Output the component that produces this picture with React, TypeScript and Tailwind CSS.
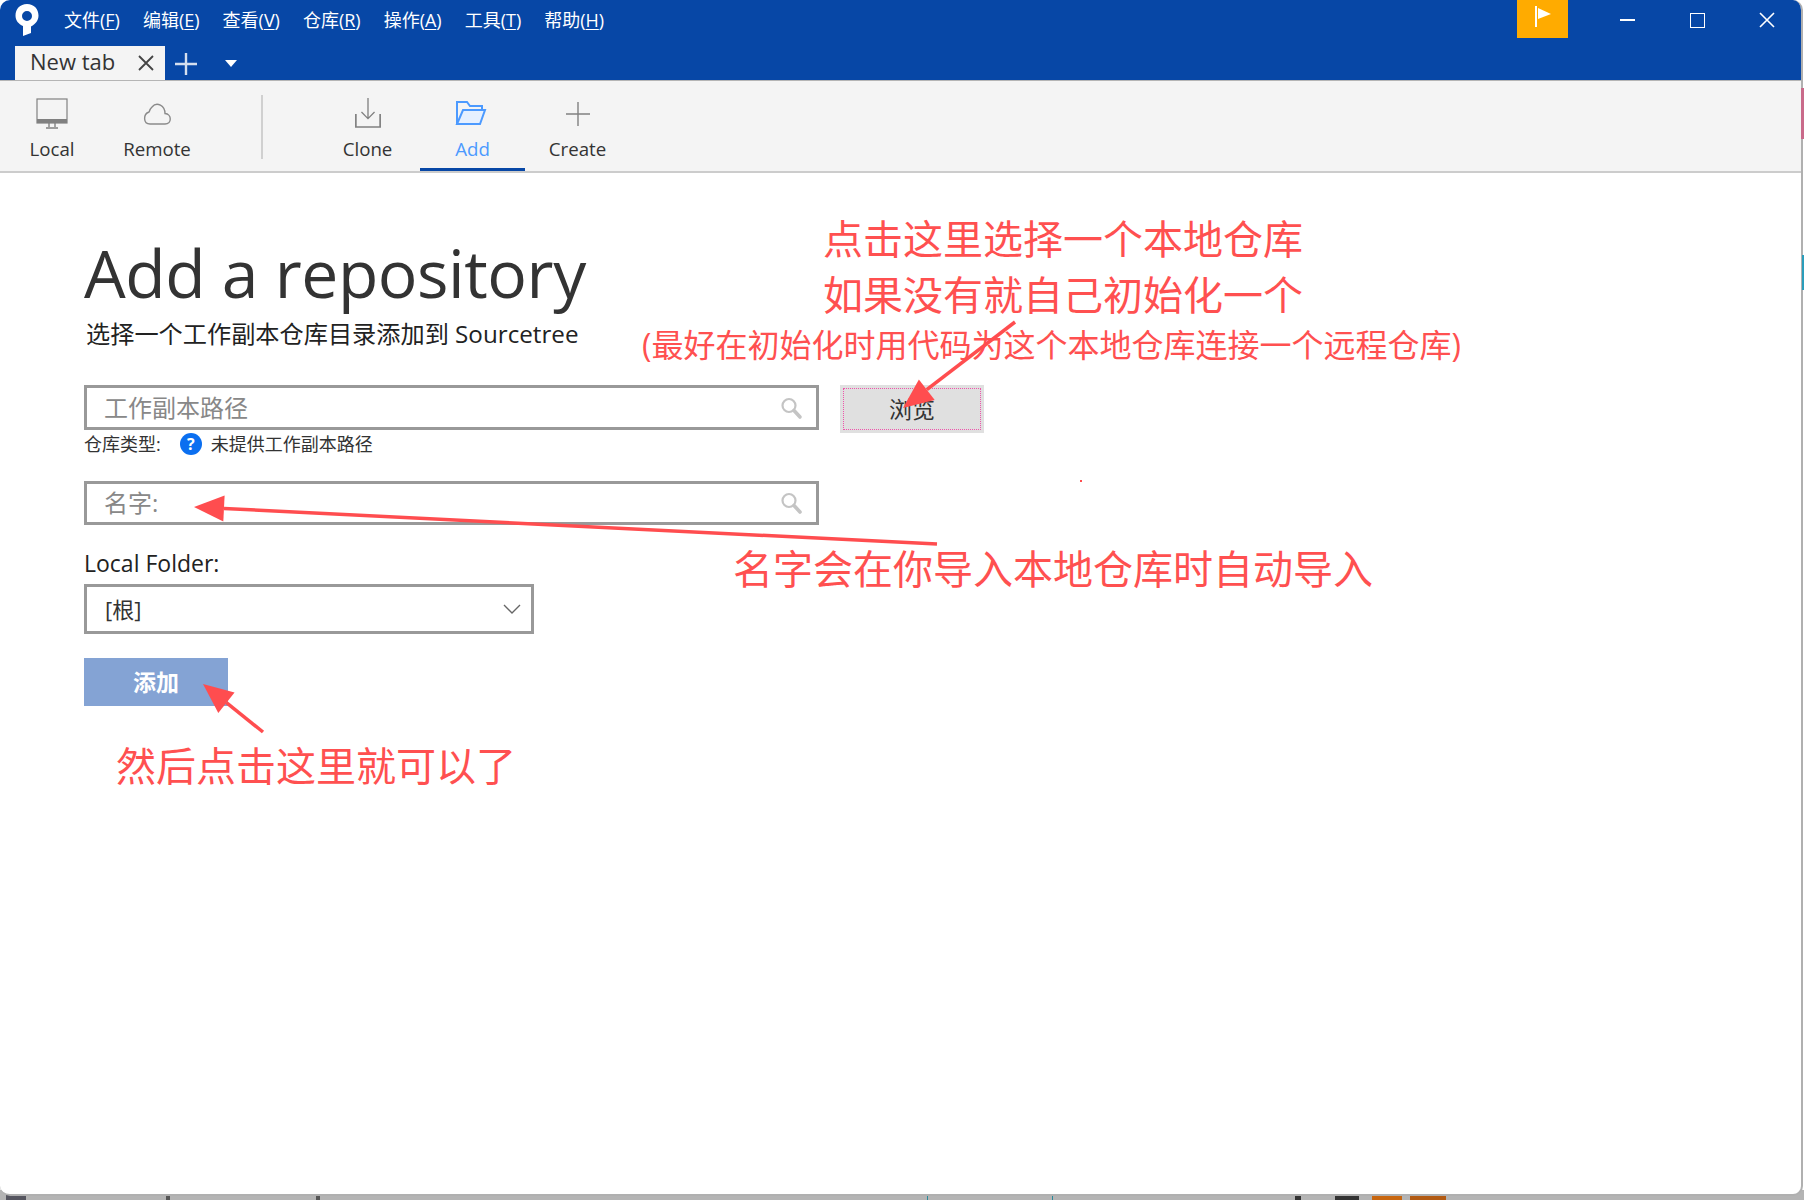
import React from "react";

const cjk = "font-['Open_Sans','Noto_Sans_CJK_SC',sans-serif]";

function Mn({ label, k }: { label: string; k: string }) {
  return (
    <span className="text-[18px] leading-[24px] text-white">
      {label}(<span className="underline underline-offset-2">{k}</span>)
    </span>
  );
}

function Search() {
  return (
    <svg width="24" height="24" viewBox="0 0 24 24" fill="none" className="shrink-0">
      <circle cx="10" cy="9.5" r="6.5" stroke="#c4c4c4" strokeWidth="2.2" />
      <path d="M15 14.5 L21 21" stroke="#c4c4c4" strokeWidth="3.6" strokeLinecap="round" />
    </svg>
  );
}

function Tool({ label, active, icon, w }: { label: string; active?: boolean; icon: React.ReactNode; w: string }) {
  return (
    <div className={`${w} h-[90px] flex flex-col items-center pt-[14px] ${active ? "border-b-[3px] border-[#0747a6]" : ""}`}>
      <div className="h-[36px] flex items-center justify-center">{icon}</div>
      <span className={`mt-[6px] text-[18.7px] leading-[24px] ${active ? "text-[#4c9aff]" : "text-[#333333]"}`}>{label}</span>
    </div>
  );
}

function Arrow({ x1, y1, x2, y2 }: { x1: number; y1: number; x2: number; y2: number }) {
  const a = Math.atan2(y2 - y1, x2 - x1);
  const L = 30;
  const W = 13;
  const bx = x2 - L * Math.cos(a);
  const by = y2 - L * Math.sin(a);
  const nx = -Math.sin(a) * W;
  const ny = Math.cos(a) * W;
  return (
    <g>
      <path d={`M${x1} ${y1} L${bx} ${by}`} stroke="#ff4d4f" strokeWidth="3.5" />
      <polygon points={`${x2},${y2} ${bx + nx},${by + ny} ${bx - nx},${by - ny}`} fill="#ff4d4f" />
    </g>
  );
}

export default function App() {
  return (
    <div className={`relative w-[1804px] h-[1200px] overflow-hidden bg-white ${cjk}`}>
      {/* desktop behind the window */}
      <div className="absolute left-0 right-0 bottom-0 h-[10px] bg-[#b4b4b4]">
        <div className="absolute left-[6px] bottom-0 w-[20px] h-[6px] bg-[#55555f]" />
        <div className="absolute left-[166px] bottom-0 w-[4px] h-[5px] bg-[#555555]" />
        <div className="absolute left-[316px] bottom-0 w-[4px] h-[4px] bg-[#555555]" />
        <div className="absolute left-[927px] bottom-0 w-[1px] h-[5px] bg-[#2a8a9a]" />
        <div className="absolute left-[1052px] bottom-0 w-[1px] h-[5px] bg-[#2a8a9a]" />
        <div className="absolute left-[1295px] bottom-0 w-[6px] h-[5px] bg-[#333333]" />
        <div className="absolute left-[1335px] bottom-0 w-[24px] h-[5px] bg-[#333333]" />
        <div className="absolute left-[1372px] bottom-0 w-[30px] h-[5px] bg-[#c8660f]" />
        <div className="absolute left-[1410px] bottom-0 w-[36px] h-[5px] bg-[#b25a12]" />
      </div>

      {/* window */}
      <div className="relative w-[1803px] h-[1196px] bg-white rounded-[10px] overflow-hidden border-r-2 border-b-2 border-[#b0b0b0] flex flex-col">
        <header className="h-[80px] bg-[#0747a6] relative shrink-0">
          <div className="h-[40px] flex items-center pl-[14px]">
            <svg width="26" height="34" viewBox="0 0 26 34" className="shrink-0">
              <path fillRule="evenodd" fill="#ffffff" d="M13 1C6 1 1.500 6 1.500 12.500C1.500 17.500 4.500 21 9 23V33L17 30V23.500C22 21 24.500 17 24.500 12.500C24.500 6 20 1 13 1ZM13 8A5 5 0 1 1 13 18A5 5 0 1 1 13 8Z" />
            </svg>
            <nav className="ml-[24px] flex gap-[23px]">
              <Mn label="文件" k="F" />
              <Mn label="编辑" k="E" />
              <Mn label="查看" k="V" />
              <Mn label="仓库" k="R" />
              <Mn label="操作" k="A" />
              <Mn label="工具" k="T" />
              <Mn label="帮助" k="H" />
            </nav>
            <div className="ml-auto flex items-start h-[40px]">
              <div className="w-[51px] h-[38px] bg-[#ffab00] flex items-start justify-center">
                <svg width="20" height="24" viewBox="0 0 20 24" className="mt-[3px]">
                  <rect x="2" y="3" width="2" height="21" fill="#fff" />
                  <polygon points="5,5 18,11 5,16" fill="#fff" />
                </svg>
              </div>
              <div className="w-[70px] h-[40px] ml-[24px] flex items-center justify-center">
                <div className="w-[15px] h-[2px] bg-white" />
              </div>
              <div className="w-[70px] h-[40px] flex items-center justify-center">
                <div className="w-[15px] h-[15px] border-[1.5px] border-white" />
              </div>
              <div className="w-[69px] h-[40px] flex items-center justify-center">
                <svg width="16" height="16" viewBox="0 0 16 16">
                  <path d="M1 1L15 15M15 1L1 15" stroke="#fff" strokeWidth="1.6" />
                </svg>
              </div>
            </div>
          </div>
          <div className="h-[40px] flex items-end pl-[15px]">
            <div className="w-[150px] h-[34px] bg-[#f4f4f4] flex items-center pl-[15px] pr-[11px] justify-between">
              <span className="text-[22px] leading-[24px] text-[#333333] -mt-[5px]">New tab</span>
              <svg width="16" height="16" viewBox="0 0 16 16">
                <path d="M1 1L15 15M15 1L1 15" stroke="#444" strokeWidth="1.8" />
              </svg>
            </div>
            <svg width="22" height="22" viewBox="0 0 22 22" className="ml-[10px] mb-[5px]">
              <path d="M11 0V22M0 11H22" stroke="#d5dfef" strokeWidth="2.4" />
            </svg>
            <svg width="12" height="8" viewBox="0 0 12 8" className="ml-[28px] mb-[12px]">
              <polygon points="0,0 12,0 6,7" fill="#ffffff" />
            </svg>
          </div>
        </header>

        <div className="h-[93px] bg-[#f4f4f4] border-t border-[#b5b5b5] border-b-2 border-b-[#cccccc] flex shrink-0">
          <Tool
            w="w-[78px] ml-[13px]"
            label="Local"
            icon={
              <svg width="32" height="32" viewBox="0 0 32 32" fill="none" className="mt-[2px]">
                <rect x="1" y="1" width="30" height="24" stroke="#808080" strokeWidth="1.2" />
                <rect x="1" y="21" width="30" height="4" fill="#808080" />
                <path d="M13 25V29M19 25V29M10 30H22" stroke="#808080" strokeWidth="1.4" />
              </svg>
            }
          />
          <Tool
            w="w-[80px] ml-[26px]"
            label="Remote"
            icon={
              <svg width="30" height="26" viewBox="0 0 30 26" fill="none" className="-mt-[1px]">
                <path d="M8 24H23C30 24 30 14 23 13.500C23 6 15 1 10 7C7 10 8 11 7 12C1 14 1 24 8 24Z" stroke="#8a8a8a" strokeWidth="1.4" />
              </svg>
            }
          />
          <div className="w-[2px] h-[64px] bg-[#d0d0d0] mt-[14px] ml-[64px]" />
          <Tool
            w="w-[105px] ml-[52px]"
            label="Clone"
            icon={
              <svg width="28" height="32" viewBox="0 0 30 34" fill="none">
                <path d="M15 1V23M8 16L15 23L22 16" stroke="#808080" strokeWidth="1.4" />
                <path d="M2 18V32H28V18" stroke="#808080" strokeWidth="1.8" />
              </svg>
            }
          />
          <Tool
            w="w-[105px]"
            active
            label="Add"
            icon={
              <svg width="32" height="26" viewBox="0 0 32 26" fill="none" className="-ml-[3px]">
                <path d="M2 24V2H12L15 6H27V10" stroke="#4c9aff" strokeWidth="2" />
                <path d="M2 24L8 10H30L25 24Z" stroke="#4c9aff" strokeWidth="2" fill="#e6f0ff" />
              </svg>
            }
          />
          <Tool
            w="w-[105px]"
            label="Create"
            icon={
              <svg width="24" height="30" viewBox="0 0 24 30" fill="none" className="mt-[1px]">
                <path d="M12 3V27M0 15H24" stroke="#808080" strokeWidth="1.4" />
              </svg>
            }
          />
        </div>

        <main className="flex-1 pl-[84px] pt-[61px]">
          <h1 className="text-[66px] leading-[76px] text-[#333333] tracking-[-0.45px]">Add a repository</h1>
          <p className="ml-[2px] mt-[9px] text-[24.2px] leading-[30px] text-[#222222]">选择一个工作副本仓库目录添加到 Sourcetree</p>

          <div className="mt-[36px] flex items-start gap-[21px] h-[47px]">
            <div className="w-[735px] h-[45px] border-[3px] border-[#999999] flex items-center justify-between pl-[17px] pr-[13px]">
              <span className="text-[24px] text-[#888888]">工作副本路径</span>
              <Search />
            </div>
            <div className="w-[144px] h-[48px] bg-[#e0e0e0] p-[3px]">
              <div className="w-full h-full border border-dotted border-[#ee55aa] flex items-center justify-center text-[23px] text-[#333333]">
                浏览
              </div>
            </div>
          </div>

          <div className="h-[24px] flex items-center text-[18px] text-[#333333]">
            <span>仓库类型:</span>
            <span className="ml-[19px] w-[22px] h-[22px] rounded-full bg-[#0b6ff0] text-white text-[16px] font-bold flex items-center justify-center">?</span>
            <span className="ml-[9px]">未提供工作副本路径</span>
          </div>

          <div className="mt-[25px] w-[735px] h-[44px] border-[3px] border-[#999999] flex items-center justify-between pl-[17px] pr-[13px]">
            <span className="text-[24px] text-[#888888]">名字:</span>
            <Search />
          </div>

          <div className="mt-[22px] text-[23px] leading-[32px] text-[#222222]">Local Folder:</div>

          <div className="mt-[5px] w-[450px] h-[50px] border-[3px] border-[#999999] flex items-center justify-between pl-[18px] pr-[10px]">
            <span className="text-[22px] text-[#333333]">[根]</span>
            <svg width="18" height="10" viewBox="0 0 18 10" fill="none">
              <path d="M1 1L9 9L17 1" stroke="#666666" strokeWidth="1.4" />
            </svg>
          </div>

          <button className="mt-[24px] w-[144px] h-[48px] bg-[#84a3d4] text-white text-[23px] font-bold flex items-center justify-center">
            添加
          </button>
        </main>
      </div>

      <div className="absolute right-0 top-[88px] w-[3px] h-[51px] bg-[#c96a8a]" />
      <div className="absolute right-0 top-[255px] w-[2px] h-[35px] bg-[#2a9dbb]" />

      {/* annotations drawn on the screenshot */}
      <div className="absolute left-[823px] top-[211px] text-[40px] leading-[56px] text-[#ff5050] whitespace-nowrap pointer-events-none">
        <div>点击这里选择一个本地仓库</div>
        <div>如果没有就自己初始化一个</div>
      </div>
      <div className="absolute left-[642px] top-[324px] text-[32px] leading-[42px] text-[#ff5050] whitespace-nowrap pointer-events-none">
        (最好在初始化时用代码为这个本地仓库连接一个远程仓库)
      </div>
      <div className="absolute left-[733px] top-[541px] text-[40px] leading-[56px] text-[#ff5050] whitespace-nowrap pointer-events-none">
        名字会在你导入本地仓库时自动导入
      </div>
      <div className="absolute left-[116px] top-[738px] text-[40px] leading-[56px] text-[#ff5050] whitespace-nowrap pointer-events-none">
        然后点击这里就可以了
      </div>
      <svg className="absolute left-0 top-0 pointer-events-none" width="1804" height="1200">
        <Arrow x1={1015} y1={322} x2={903} y2={408} />
        <Arrow x1={937} y1={544} x2={194} y2={507} />
        <Arrow x1={263} y1={732} x2={203} y2={684} />
        <rect x="1080" y="480" width="2" height="2" fill="#ff4d4f" />
      </svg>
    </div>
  );
}
